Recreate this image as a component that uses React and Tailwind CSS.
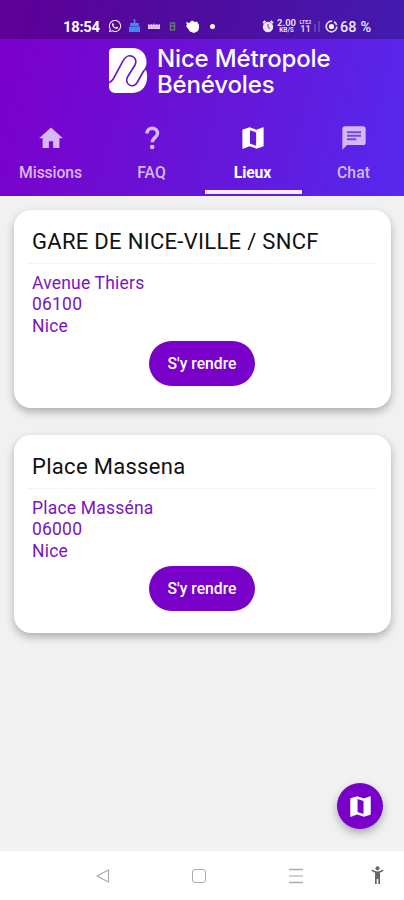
import React from "react";
import { FaWhatsapp } from "react-icons/fa";

function HomeIcon({ size }) {
  return (
    <svg width={size} height={size} viewBox="0 0 24 24" fill="currentColor">
      <path d="M10.200 20.500v-5.800h3.600v5.800h5.400V12.300h3L12 3 1.800 12.300h3v8.200z" />
    </svg>
  );
}

function QuestionIcon({ size }) {
  return (
    <svg width={size} height={size} viewBox="0 0 28 28" fill="none" stroke="currentColor">
      <path d="M9 9.500C9 2.500 19.500 2.500 19.500 9.400C19.500 13.400 14.500 13.500 14.300 18.200" strokeWidth="3.500" />
      <circle cx="14.200" cy="23" r="2.300" fill="currentColor" stroke="none" />
    </svg>
  );
}

function MapIcon({ size }) {
  return (
    <svg width={size} height={size} viewBox="0 0 24 24" fill="currentColor">
      <path fillRule="evenodd" d="M20.700 2.800l-.2.030L15 4.950 9 2.800 3.300 4.750c-.25.080-.4.300-.4.550v15.400c0 .3.240.55.550.55l.2-.030L9 19.050l6 2.150 5.700-1.950c.25-.080.4-.300.4-.55V3.300c0-.3-.16-.5-.4-.5zM14.700 18.700l-5.300-1.900V5.300l5.300 1.900z" />
    </svg>
  );
}

function ChatIcon({ size }) {
  return (
    <svg width={size} height={size} viewBox="0 0 24 24">
      <path d="M4 2h16c1.100 0 2 .9 2 2v12c0 1.100-.9 2-2 2H6l-4 4V4c0-1.100.9-2 2-2z" fill="currentColor" />
      <path d="M6 7h12M6 10h12M6 13h8" stroke="#7548d8" strokeWidth="1.700" />
    </svg>
  );
}

const tabs = [
  { label: "Missions", Icon: HomeIcon, spacing: "tracking-[-0.1px]" },
  { label: "FAQ", Icon: QuestionIcon, spacing: "tracking-[0px]" },
  { label: "Lieux", Icon: MapIcon, active: true, spacing: "tracking-[-0.1px]" },
  { label: "Chat", Icon: ChatIcon, spacing: "tracking-[0.1px]" },
];

const places = [
  { name: "GARE DE NICE-VILLE / SNCF", street: "Avenue Thiers", zip: "06100", city: "Nice" },
  { name: "Place Massena", street: "Place Masséna", zip: "06000", city: "Nice" },
];

function StatusBar() {
  return (
    <div className="flex h-[39px] items-start bg-black/25 pl-[63px] pt-[19px] text-white">
      <span className="w-[45px] text-[14.8px] font-bold leading-4 tracking-[-0.3px]">18:54</span>
      <FaWhatsapp className="h-[14px] w-[14px]" />
      <svg className="ml-[7px]" width="11" height="13" viewBox="0 0 11 13">
        <path d="M4.700 0h1.600v4h3.500v3H1.200V4h3.500zM0 7.500h11V13H0z" fill="#4389ee" />
      </svg>
      <svg className="ml-[8px] mt-[4px]" width="12" height="7" viewBox="0 0 12 7">
        <path d="M0 1l2 1 1-1 2 1 1-2 1 2 2-1 1 1 2-1v5H0z" fill="#e2c4ef" />
        <path d="M1 4h10" stroke="#c79fe0" strokeDasharray="2 1" />
      </svg>
      <svg className="ml-[9px] mt-[3px]" width="7" height="9" viewBox="0 0 7 9">
        <path d="M1.500 4V1h4v3M1.500 4h4v4h-4z" fill="none" stroke="#65756f" strokeWidth="1.500" />
      </svg>
      <svg className="ml-[10px] mt-[1px]" width="14" height="13" viewBox="0 0 14 13">
        <path d="M0 2l3 1L6 .5 9 2l2-.5L13 5v3l-1 3-4 2-4-1.500L1.500 8 0 6l1-1z" fill="#fff" />
      </svg>
      <span className="ml-[10px] mt-[5px] h-[5px] w-[5px] rounded-full bg-white" />
      <svg className="ml-[47px]" width="12" height="14" viewBox="0 0 12 14">
        <path d="M1 4l2.500-2M11 4L8.500 2" stroke="#eee3fb" strokeWidth="2" />
        <circle cx="6" cy="8" r="5.200" fill="#eee3fb" />
        <path d="M6 5v3.500l2 1" fill="none" stroke="#6b38b2" />
      </svg>
      <span className="ml-[3px] flex w-[19px] flex-col items-center font-bold text-[#e8dcf7]">
        <span className="text-[9.5px] leading-[8px]">2.00</span>
        <span className="text-[6.5px] leading-[6px]">KB/S</span>
      </span>
      <span className="ml-[3px] flex w-[13px] flex-col items-center font-bold text-[#dccdf2]">
        <span className="text-[5.500px] leading-[6px]">LTE2</span>
        <span className="text-[9px] leading-[8px]">11</span>
      </span>
      <svg className="ml-[1px]" width="8" height="14" viewBox="0 0 8 14">
        <path d="M2 5v8M6 2v11" stroke="#6540b0" strokeWidth="2" />
      </svg>
      <svg className="ml-[4px] mt-[1px]" width="13" height="13" viewBox="0 0 13 13">
        <circle cx="6.500" cy="6.500" r="5.300" fill="none" stroke="#e6daf7" strokeWidth="1.700" strokeDasharray="25 2 4 3" />
        <circle cx="6.500" cy="6.500" r="2.600" fill="#fff" />
      </svg>
      <span className="ml-[2px] whitespace-nowrap text-[14.5px] font-medium leading-[17px] tracking-[0.1px] text-[#eee6fb]">68 %</span>
    </div>
  );
}

function Brand() {
  return (
    <div className="flex h-[73px] pl-[109px] pt-[7px]">
      <svg className="mt-[2px]" width="39" height="46" viewBox="0 0 39 46">
        <path d="M5 0H23C32 0 37.500 6 37.500 14C37.500 17 37 18 36 20C38 23 38.500 27 38 31C37 40 31 45 23 45H6C3 45 0 42 0 39V4Q0 0 5 0Z" fill="#fff" />
        <path d="M-1 35C2 34.500 3 33 4.500 30.500L14 13C18.500 3.500 30 8.500 26 17L18.500 29C15 36.500 24.500 41.500 28.500 34L34 24C35.500 21.500 37 20 39 19" fill="none" stroke="#6510ca" strokeWidth="1.600" />
      </svg>
      <div className="ml-[9px] whitespace-nowrap font-['Inter',sans-serif] text-[24px] font-medium leading-[26px] text-white">
        <div className="tracking-[-0.15px]">Nice Métropole</div>
        <div className="tracking-[-0.15px]">Bénévoles</div>
      </div>
    </div>
  );
}

function PlaceCard({ place }) {
  return (
    <article className="flex h-[198px] flex-col rounded-[17px] bg-white px-[14px] pt-[18px] shadow-[0_4px_8px_rgba(0,0,0,0.28)]">
      <h2 className="h-[36px] whitespace-nowrap border-b border-[#f4f4f4] pl-1 text-[22px] leading-[28px] tracking-[0.3px] text-[#111]">
        {place.name}
      </h2>
      <div className="pl-1 pt-[8.600px] text-[17.5px] leading-[21.5px] tracking-[0.2px] text-[#7a14c2]">
        <div>{place.street}</div>
        <div>{place.zip}</div>
        <div>{place.city}</div>
      </div>
      <button className="mr-[1px] mt-[3.900px] h-[45px] w-[106px] self-center rounded-full bg-[#7800c9] text-[15.7px] font-medium text-white">
        S'y rendre
      </button>
    </article>
  );
}

function AndroidNav() {
  return (
    <nav className="relative flex h-[49px] items-center bg-white text-[#aaa]">
      <svg className="ml-[95px]" width="16" height="16" viewBox="0 0 16 16">
        <path d="M13.500 2v12L2 8z" fill="none" stroke="currentColor" strokeWidth="1.200" strokeLinejoin="round" />
      </svg>
      <span className="ml-[81px] h-[14px] w-[14px] rounded-[3px] border border-[#aaa]" />
      <svg className="ml-[83px]" width="14" height="16" viewBox="0 0 14 16">
        <path d="M0 1.500h14M0 14.500h14" stroke="currentColor" strokeWidth="1.300" />
        <path d="M0 8h14" stroke="#d2d2d2" strokeWidth="2" />
      </svg>
      <svg className="ml-[68px]" width="13" height="19" viewBox="0 0 13 19">
        <circle cx="6.500" cy="2.300" r="2" fill="#666" />
        <path d="M.8 4.200Q6.500 8.500 12.200 4.200M6.500 6v6" fill="none" stroke="#666" strokeWidth="1.600" />
        <path d="M4 6.500h5V18H7.300v-5H5.700v5H4z" fill="#666" />
      </svg>
    </nav>
  );
}

export default function App() {
  return (
    <main className="flex h-[900px] w-[404px] flex-col overflow-hidden bg-[#f1f1f1] font-['Roboto',sans-serif]">
      <header className="h-[196px] shrink-0 bg-[linear-gradient(105deg,#7b00cb_5%,#6714d7_50%,#5728ee_100%)]">
        <StatusBar />
        <Brand />
        <div className="grid h-[84px] grid-cols-4">
          {tabs.map(({ label, Icon, active, spacing }) => (
            <div key={label} className={`flex flex-col items-center pt-[12px] ${active ? "text-white" : "text-[#d7b8f5]"}`}>
              <Icon size={28} />
              <span className={`mt-[11px] text-[15.700px] leading-5 ${active ? "font-bold" : "font-medium"} ${spacing}`}>{label}</span>
              {active && <span className="ml-[1px] mt-[7px] h-[4px] w-[97px] bg-[#f6eafd]" />}
            </div>
          ))}
        </div>
      </header>
      <section className="relative flex grow flex-col gap-[27px] pl-[14px] pr-[13px] pt-[14px]">
        {places.map((place) => <PlaceCard key={place.name} place={place} />)}
        <button aria-label="Carte" className="absolute bottom-[22px] right-[21px] flex h-[46px] w-[46px] items-center justify-center rounded-full bg-[#7800c9] text-white shadow-[0_4px_8px_rgba(0,0,0,0.3)]">
          <MapIcon size={27} />
        </button>
      </section>
      <AndroidNav />
    </main>
  );
}
